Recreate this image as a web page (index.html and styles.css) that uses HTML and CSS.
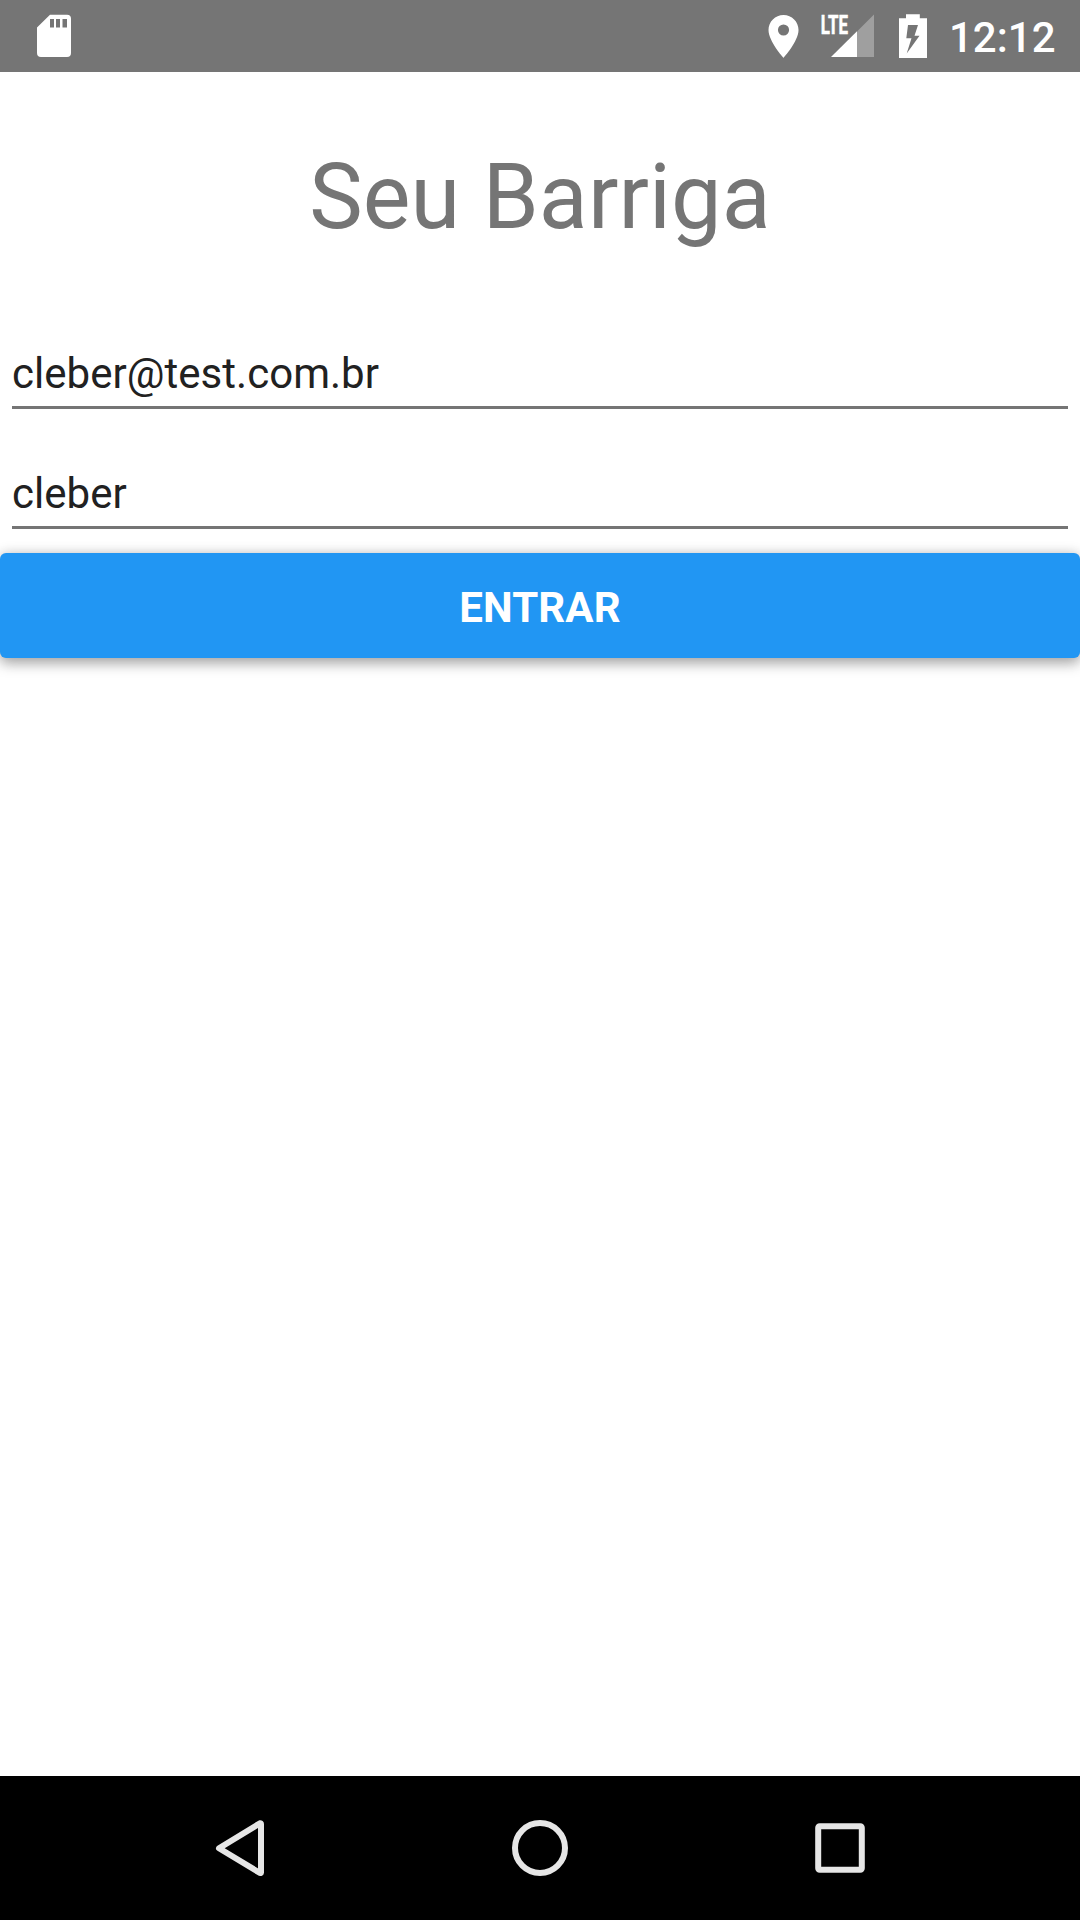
FILE: index.html
```html
<!DOCTYPE html>
<html lang="pt-BR">
<head>
<meta charset="utf-8">
<title>Seu Barriga</title>
<link rel="stylesheet" href="styles.css">
</head>
<body>
<div class="screen">
  <header class="status">
    <svg class="sd" width="36" height="72" viewBox="36 0 36 72">
      <path fill="#fff" fill-rule="evenodd" d="M50 14.700H67Q71 14.700 71 18.700V53Q71 57 67 57H41Q37 57 37 53V27.500ZM50 19V27.500H54V19ZM56 19V27.500H60V19ZM62.500 19V27.500H67V19Z"/>
    </svg>
    <div class="tray">
      <svg width="52" height="72" viewBox="758 0 52 72">
        <path fill="#fff" transform="translate(757.8 10.7) scale(2.143)" d="M12 2C8.130 2 5 5.130 5 9c0 5.250 7 13 7 13s7-7.750 7-13c0-3.870-3.130-7-7-7zm0 9.600a2.600 2.600 0 1 1 0-5.200 2.600 2.600 0 0 1 0 5.200z"/>
      </svg>
      <svg width="64" height="72" viewBox="815 0 64 72">
        <path fill="#9f9f9f" d="M857 31.500 874 14.500V57H857Z"/>
        <path fill="#fff" d="M831 57 857 31.300V57Z"/>
        <text class="lte" x="820.800" y="33.800" textLength="27.200" lengthAdjust="spacingAndGlyphs">LTE</text>
      </svg>
      <svg width="32" height="72" viewBox="897 0 32 72">
        <path fill="#fff" fill-rule="evenodd" d="M906 14.300H919.800V18.300H927V58H899V18.300H906ZM908 25 906.300 38.200H911.500L906.700 53.500 919.500 35.800H914.500L918 25Z"/>
      </svg>
      <span class="clock">12:12</span>
    </div>
  </header>
  <main class="content">
    <h1 class="title">Seu Barriga</h1>
    <div class="field">cleber@test.com.br</div>
    <div class="field">cleber</div>
    <button class="enter" type="button">ENTRAR</button>
  </main>
  <nav class="nav">
    <svg width="60" height="60" viewBox="210 1818 60 60"><path d="M219 1848.300 260 1823.200Q261 1823 261 1824V1872.500Q261 1873.300 260 1873Z"/></svg>
    <svg width="60" height="60" viewBox="510 1818 60 60"><circle cx="540" cy="1848" r="25"/></svg>
    <svg width="60" height="60" viewBox="810 1818 60 60"><rect x="818.200" y="1826.200" width="43.600" height="43.600" rx="1.500"/></svg>
  </nav>
</div>
</body>
</html>
```
FILE: styles.css
```css
* { box-sizing: border-box; }

body {
  margin: 0;
  font-family: Roboto, sans-serif;
  background: #fff;
}

.screen {
  display: flex;
  flex-direction: column;
  width: 1080px;
  height: 1920px;
  overflow: hidden;
}

.status {
  display: flex;
  justify-content: space-between;
  height: 72px;
  padding: 0 24px 0 36px;
  background: #757575;
}

.status svg { display: block; flex: none; }

.tray { display: flex; }
.tray svg + svg { margin-left: 5px; }
.tray svg:nth-of-type(3) { margin-left: 18px; }

.lte {
  font-size: 25.5px;
  font-weight: 700;
  fill: #fff;
  stroke: #fff;
  stroke-width: 0.6px;
}

.clock {
  width: 106px;
  margin-left: 20px;
  margin-right: 1px;
  padding-top: 2px;
  font-size: 42px;
  font-weight: 500;
  line-height: 72px;
  text-align: right;
  white-space: nowrap;
  color: #fff;
}

.content {
  display: flex;
  flex-direction: column;
  flex: 1;
}

.title {
  margin: 61px 0 77px;
  font-size: 90px;
  font-weight: 400;
  line-height: 130px;
  letter-spacing: 0.1px;
  text-align: center;
  color: #757575;
}

.field {
  height: 69px;
  margin: 0 12px 51px;
  border-bottom: 3px solid #757575;
  font-size: 42px;
  line-height: 68px;
  letter-spacing: 0.03px;
  color: #212121;
}

.field + .field { margin-bottom: 24px; }

.enter {
  height: 105px;
  padding: 4px 0 0;
  border: 0;
  border-radius: 6px;
  background: #2196f3;
  box-shadow: 0 6px 14px rgba(0, 0, 0, 0.25), 0 1px 14px rgba(0, 0, 0, 0.2);
  font-family: inherit;
  font-size: 42px;
  font-weight: 700;
  letter-spacing: 0.1px;
  color: #fff;
}

.nav {
  display: flex;
  justify-content: center;
  align-items: center;
  gap: 240px;
  height: 144px;
  background: #000;
}

.nav svg {
  fill: none;
  stroke: #e6e6e6;
  stroke-width: 6;
  stroke-linejoin: round;
}
```
